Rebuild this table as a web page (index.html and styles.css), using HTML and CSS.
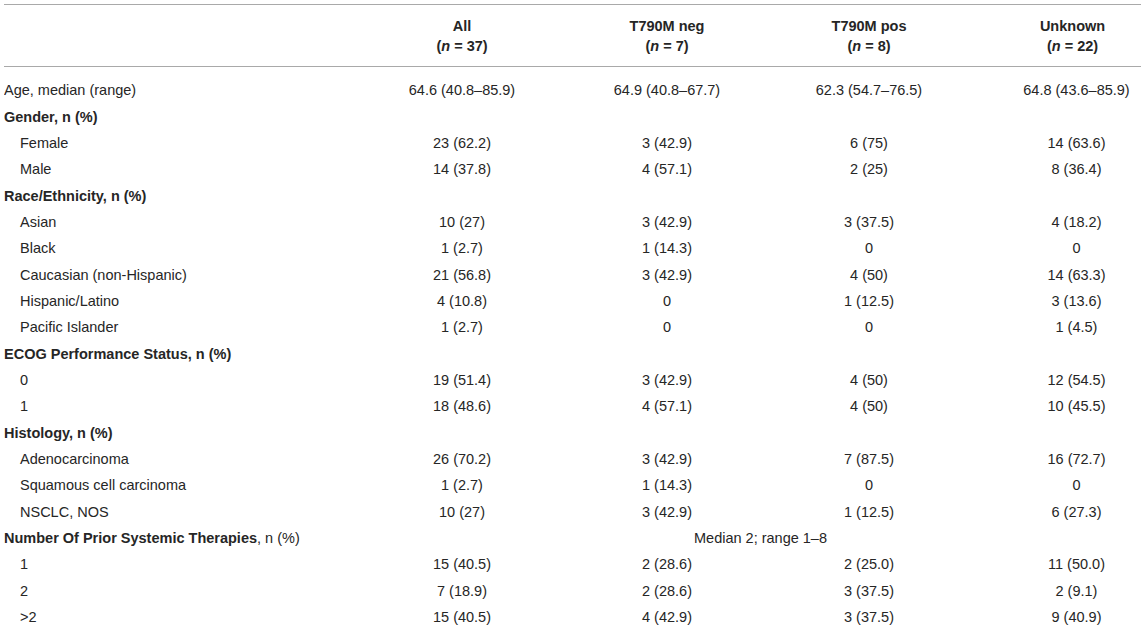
FILE: index.html
```html
<!DOCTYPE html>
<html lang="en">
<head>
    <meta charset="UTF-8">
    <title>Patient characteristics</title>
    <link rel="stylesheet" href="styles.css">
</head>
<body>

<table class="data-table">
    <colgroup>
        <col class="col-label">
        <col class="col-all">
        <col class="col-neg">
        <col class="col-pos">
        <col class="col-unk">
    </colgroup>
    <thead>
        <tr>
            <th></th>
            <th>All<br>(<i>n</i> = 37)</th>
            <th>T790M neg<br>(<i>n</i> = 7)</th>
            <th>T790M pos<br>(<i>n</i> = 8)</th>
            <th class="last">Unknown<br>(<i>n</i> = 22)</th>
        </tr>
    </thead>
    <tbody>
        <tr class="first">
            <td class="label">Age, median (range)</td>
            <td>64.6 (40.8–85.9)</td>
            <td>64.9 (40.8–67.7)</td>
            <td>62.3 (54.7–76.5)</td>
            <td class="last">64.8 (43.6–85.9)</td>
        </tr>
        <tr><td class="label group" colspan="5">Gender, n (%)</td></tr>
        <tr><td class="label sub">Female</td><td>23 (62.2)</td><td>3 (42.9)</td><td>6 (75)</td><td class="last">14 (63.6)</td></tr>
        <tr><td class="label sub">Male</td><td>14 (37.8)</td><td>4 (57.1)</td><td>2 (25)</td><td class="last">8 (36.4)</td></tr>
        <tr><td class="label group" colspan="5">Race/Ethnicity, n (%)</td></tr>
        <tr><td class="label sub">Asian</td><td>10 (27)</td><td>3 (42.9)</td><td>3 (37.5)</td><td class="last">4 (18.2)</td></tr>
        <tr><td class="label sub">Black</td><td>1 (2.7)</td><td>1 (14.3)</td><td>0</td><td class="last">0</td></tr>
        <tr><td class="label sub">Caucasian (non-Hispanic)</td><td>21 (56.8)</td><td>3 (42.9)</td><td>4 (50)</td><td class="last">14 (63.3)</td></tr>
        <tr><td class="label sub">Hispanic/Latino</td><td>4 (10.8)</td><td>0</td><td>1 (12.5)</td><td class="last">3 (13.6)</td></tr>
        <tr><td class="label sub">Pacific Islander</td><td>1 (2.7)</td><td>0</td><td>0</td><td class="last">1 (4.5)</td></tr>
        <tr><td class="label group" colspan="5">ECOG Performance Status, n (%)</td></tr>
        <tr><td class="label sub">0</td><td>19 (51.4)</td><td>3 (42.9)</td><td>4 (50)</td><td class="last">12 (54.5)</td></tr>
        <tr><td class="label sub">1</td><td>18 (48.6)</td><td>4 (57.1)</td><td>4 (50)</td><td class="last">10 (45.5)</td></tr>
        <tr><td class="label group" colspan="5">Histology, n (%)</td></tr>
        <tr><td class="label sub">Adenocarcinoma</td><td>26 (70.2)</td><td>3 (42.9)</td><td>7 (87.5)</td><td class="last">16 (72.7)</td></tr>
        <tr><td class="label sub">Squamous cell carcinoma</td><td>1 (2.7)</td><td>1 (14.3)</td><td>0</td><td class="last">0</td></tr>
        <tr><td class="label sub">NSCLC, NOS</td><td>10 (27)</td><td>3 (42.9)</td><td>1 (12.5)</td><td class="last">6 (27.3)</td></tr>
        <tr>
            <td class="label"><b>Number Of Prior Systemic Therapies</b>, n (%)</td>
            <td class="span-note" colspan="4">Median 2; range 1–8</td>
        </tr>
        <tr><td class="label sub">1</td><td>15 (40.5)</td><td>2 (28.6)</td><td>2 (25.0)</td><td class="last">11 (50.0)</td></tr>
        <tr><td class="label sub">2</td><td>7 (18.9)</td><td>2 (28.6)</td><td>3 (37.5)</td><td class="last">2 (9.1)</td></tr>
        <tr><td class="label sub">&gt;2</td><td>15 (40.5)</td><td>4 (42.9)</td><td>3 (37.5)</td><td class="last">9 (40.9)</td></tr>
    </tbody>
</table>

</body>
</html>
```

FILE: styles.css
```css
body {
    margin: 4px;
    background: #fff;
    font-family: "Liberation Sans", Arial, sans-serif;
    font-size: 14.5px;
    color: #262626;
}
.data-table {
    width: 1137px;
    border-collapse: collapse;
    table-layout: fixed;
}
.col-label { width: 356px; }
.col-all { width: 204px; }
.col-neg { width: 206px; }
.col-pos { width: 198px; }
.col-unk { width: 173px; }

.data-table thead th {
    border-top: 1px solid #a9a9a9;
    border-bottom: 1px solid #a9a9a9;
    height: 61px;
    padding: 0;
    line-height: 20px;
    font-weight: bold;
    text-align: center;
    vertical-align: middle;
}
.data-table thead th.last {
    padding-left: 36px;
}
.data-table td {
    height: 26.35px;
    padding: 0;
    line-height: 18px;
    text-align: center;
    vertical-align: middle;
    white-space: nowrap;
}
.data-table tr.first td {
    height: 26.35px;
    padding-top: 10px;
}
.data-table td.last {
    padding-left: 44px;
}
.data-table td.label {
    text-align: left;
}
.data-table td.group {
    font-weight: bold;
}
.data-table td.sub {
    padding-left: 16px;
}
.data-table td.span-note {
    padding-left: 20px;
}
```
